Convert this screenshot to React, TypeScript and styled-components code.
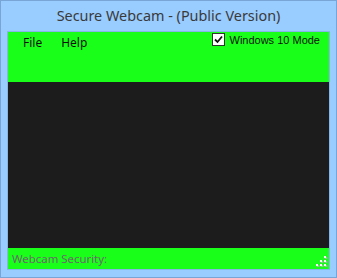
import React from "react";
import styled, { createGlobalStyle } from "styled-components";

const Global = createGlobalStyle`
  html, body { margin: 0; padding: 0; background: #fff; }
  #root { width: 337px; height: 278px; }
`;

const Window = styled.div`
  box-sizing: border-box;
  width: 337px;
  height: 278px;
  background: #99ccff;
  border: 1px solid #78a5d5;
  display: flex;
  flex-direction: column;
  padding: 0 6px 7px 6px;
`;

const TitleBar = styled.div`
  height: 29px;
  display: flex;
  align-items: center;
  justify-content: center;
  font-family: "Noto Sans", "Open Sans", sans-serif;
  font-size: 14.4px;
  color: #3a3a3a;
  padding-bottom: 1px;
`;

const Client = styled.div`
  flex: 1;
  display: flex;
  flex-direction: column;
  border: 1px solid #86b6e6;
`;

const MenuArea = styled.div`
  height: 50px;
  background: #19ff19;
  display: flex;
  justify-content: space-between;
  align-items: flex-start;
`;

const Menu = styled.div`
  display: flex;
  gap: 19px;
  padding: 3px 0 0 15px;
  font-family: "Noto Sans", "Open Sans", sans-serif;
  font-size: 12px;
  color: #111;
`;

const MenuItem = styled.span`
  line-height: 16px;
`;

const ModeToggle = styled.label`
  display: flex;
  align-items: center;
  gap: 5px;
  padding: 1px 9px 0 0;
  font-family: "Liberation Sans", Arial, sans-serif;
  font-size: 11px;
  color: #111;
`;

const Box = styled.span`
  box-sizing: border-box;
  width: 13px;
  height: 13px;
  border: 1px solid #333;
  background: #fff;
  display: flex;
  align-items: center;
  justify-content: center;
`;

const Video = styled.div`
  flex: 1;
  background: #1c1c1c;
`;

const StatusBar = styled.div`
  height: 21px;
  background: #19ff19;
  display: flex;
  align-items: center;
  justify-content: space-between;
  padding: 0 0 0 4px;
  font-family: "Noto Sans", "Open Sans", sans-serif;
  font-size: 11.4px;
  color: #6a6a6a;
`;

const Grip = styled.svg`
  align-self: flex-end;
  margin: 0 2px 2px 0;
`;

export default function App() {
  const dots = [
    [9, 1],
    [5, 5],
    [9, 5],
    [1, 9],
    [5, 9],
    [9, 9],
  ];
  return (
    <>
      <Global />
      <Window>
        <TitleBar>Secure Webcam - (Public Version)</TitleBar>
        <Client>
          <MenuArea>
            <Menu>
              <MenuItem>File</MenuItem>
              <MenuItem>Help</MenuItem>
            </Menu>
            <ModeToggle>
              <Box>
                <svg width="9" height="9" viewBox="0 0 9 9">
                  <path d="M1 4.5 L3.5 7 L8 1.5" fill="none" stroke="#111" strokeWidth="1.8" />
                </svg>
              </Box>
              Windows 10 Mode
            </ModeToggle>
          </MenuArea>
          <Video />
          <StatusBar>
            <span>Webcam Security:</span>
            <Grip width="12" height="12" viewBox="0 0 12 12">
              {dots.map(([x, y], i) => (
                <g key={i}>
                  <rect x={x + 1} y={y + 1} width="2" height="2" fill="#b0b0b0" />
                  <rect x={x} y={y} width="2" height="2" fill="#fff" />
                </g>
              ))}
            </Grip>
          </StatusBar>
        </Client>
      </Window>
    </>
  );
}
